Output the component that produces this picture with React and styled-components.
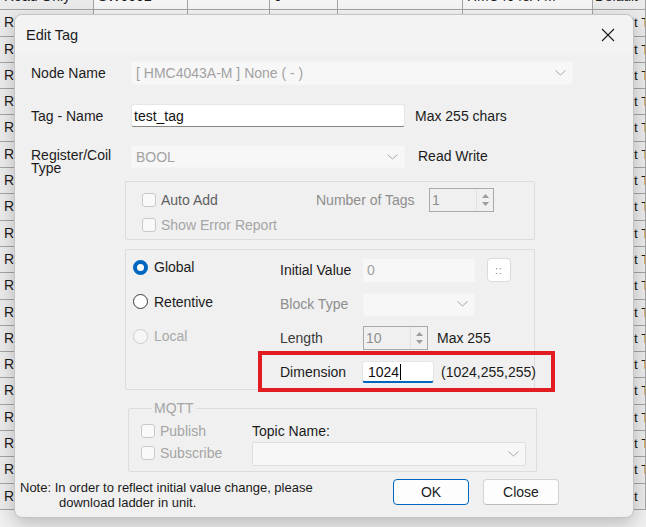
import React from 'react'
import styled, { createGlobalStyle } from 'styled-components'

const GlobalStyle = createGlobalStyle`
  html, body {
    margin: 0;
    padding: 0;
  }
  body {
    width: 646px;
    height: 527px;
    overflow: hidden;
    background: #f0f0f0;
    font-family: 'Liberation Sans', Arial, sans-serif;
    color: #1b1b1b;
  }
`

const Desktop = styled.div`
  position: relative;
  width: 646px;
  height: 527px;
  overflow: hidden;
`

// data grid behind the dialog
const Grid = styled.div`
  margin-top: -16px;
`

const GridRow = styled.div`
  display: grid;
  grid-template-columns: 94px 94px 82px 68px 125px 130px 1fr;
  height: 26.3px;
  box-sizing: border-box;
  border-bottom: 1px solid #a3a3a3;
`

const Cell = styled.div`
  border-right: 1px solid #a3a3a3;
  padding-left: ${(p) => (p.$last ? 2 : 4)}px;
  font-size: ${(p) => (p.$last ? 13.5 : 14)}px;
  line-height: 25px;
  white-space: nowrap;
  overflow: hidden;
  background: ${(p) => (p.$side ? '#ebebeb' : '#f5f5f5')};
`

const Dialog = styled.div`
  position: absolute;
  left: 14px;
  top: 14px;
  width: 620px;
  height: 504px;
  box-sizing: border-box;
  background: #f0f0f0;
  border: 1px solid #c4c4c4;
  border-radius: 8px;
  box-shadow: 0 6px 18px rgba(0, 0, 0, 0.22);
  display: flex;
  flex-direction: column;
`

const TitleBar = styled.div`
  height: 40px;
  display: flex;
  align-items: center;
  justify-content: space-between;
  padding-left: 11px;
  background: #f3f3f3;
  border-radius: 8px 8px 0 0;
`

const Title = styled.div`
  font-size: 14.5px;
`

const CloseX = styled.div`
  width: 46px;
  height: 40px;
  display: flex;
  align-items: center;
  justify-content: center;
  margin-right: 2px;
`

const Body = styled.div`
  padding: 6px 0 0 16px;
  font-size: 14px;
`

const FieldRow = styled.div`
  display: flex;
  align-items: ${(p) => (p.$top ? 'flex-start' : 'center')};
  height: ${(p) => p.$h || 24}px;
  margin-top: ${(p) => p.$mt || 0}px;
`

const Label = styled.div`
  width: ${(p) => p.$w || 100}px;
  flex: none;
  color: ${(p) => p.$color || '#1b1b1b'};
  line-height: ${(p) => (p.$stack ? '13px' : 'normal')};
  padding-top: ${(p) => (p.$stack ? 4 : 0)}px;
`

const Combo = styled.div`
  width: ${(p) => p.$w}px;
  height: ${(p) => p.$h || 23}px;
  box-sizing: border-box;
  background: #f7f7f7;
  border: 1px solid ${(p) => (p.$outlined ? '#dedede' : '#f4f4f4')};
  border-radius: 2px;
  display: flex;
  align-items: center;
  justify-content: space-between;
  padding: 0 6px 0 4px;
  color: #a2a2a2;
  flex: none;
`

const TextBox = styled.div`
  width: ${(p) => p.$w}px;
  height: ${(p) => p.$h || 23}px;
  box-sizing: border-box;
  background: #fff;
  border: 1px solid #e6e6e6;
  border-bottom: ${(p) => (p.$focus ? '2px solid #0067c0' : '1px solid #858585')};
  border-radius: 3px;
  display: flex;
  align-items: center;
  padding-left: ${(p) => (p.$focus ? 5 : 2)}px;
  color: #111;
  flex: none;
`

const Caret = styled.span`
  display: inline-block;
  width: 1px;
  height: 16px;
  background: #000;
  margin-left: 1px;
`

const Flat = styled.div`
  width: ${(p) => p.$w}px;
  height: 23px;
  box-sizing: border-box;
  background: #f7f7f7;
  display: flex;
  align-items: center;
  padding-left: 4px;
  color: #a2a2a2;
  flex: none;
`

const Hint = styled.div`
  margin-left: ${(p) => p.$ml || 10}px;
  margin-top: ${(p) => p.$mt || 0}px;
  color: #1b1b1b;
  white-space: nowrap;
`

const Spinner = styled.div`
  width: ${(p) => p.$w}px;
  height: 24px;
  box-sizing: border-box;
  border: 1px solid #a9a9a9;
  background: #f0f0f0;
  display: flex;
  align-items: center;
  justify-content: space-between;
  padding-left: 2px;
  color: #8f8f8f;
  flex: none;
`

const Arrows = styled.div`
  width: 16px;
  height: 100%;
  display: flex;
  flex-direction: column;
  align-items: center;
  justify-content: center;
  gap: 4px;
  border-left: 1px solid #e2e2e2;
`

const Group = styled.div`
  margin: ${(p) => p.$mt}px 0 0 94px;
  width: 410px;
  height: ${(p) => p.$h}px;
  box-sizing: border-box;
  border: 1px solid #dcdcdc;
  border-radius: 2px;
`

const AutoBlock = styled.div`
  padding: 6px 0 0 16px;
`

const CheckRow = styled.div`
  display: flex;
  align-items: center;
  height: ${(p) => p.$h || 22}px;
  width: ${(p) => (p.$w ? `${p.$w}px` : 'auto')};
  flex: none;
  color: ${(p) => p.$color || '#a5a5a5'};
`

const Box = styled.span`
  width: 14px;
  height: 14px;
  box-sizing: border-box;
  border: 1px solid #c9c9c9;
  border-radius: 3px;
  background: #f9f9f9;
  margin-right: 5px;
  flex: none;
`

const VarLayout = styled.div`
  display: flex;
  padding-left: 7px;
`

const RadioCol = styled.div`
  width: 147px;
  flex: none;
`

const RadioRow = styled.div`
  display: flex;
  align-items: center;
  height: 34.5px;
  color: ${(p) => (p.$disabled ? '#a9a9a9' : '#1b1b1b')};
`

const Radio = styled.span`
  width: 15px;
  height: 15px;
  box-sizing: border-box;
  border-radius: 50%;
  flex: none;
  margin-right: 6px;
  border: ${(p) =>
    p.$checked ? '4.5px solid #0067c0' : p.$disabled ? '1px solid #cdcdcd' : '1px solid #3c3c3c'};
  background: ${(p) => (p.$disabled ? '#f6f6f6' : '#fff')};
`

const FieldCol = styled.div`
  padding-top: 3px;
`

const DotsButton = styled.div`
  width: 24px;
  height: 24px;
  box-sizing: border-box;
  margin-left: 12px;
  background: #fff;
  border: 1px solid #dadada;
  border-radius: 4px;
  display: flex;
  align-items: center;
  justify-content: center;
  color: #7a7a7a;
  font-size: 10px;
  letter-spacing: 1px;
`

const Highlight = styled.div`
  position: absolute;
  left: 243px;
  top: 336px;
  width: 297px;
  height: 41px;
  box-sizing: border-box;
  border: 4px solid #e11d22;
  pointer-events: none;
`

const Mqtt = styled.fieldset`
  margin: 10px 0 0 97px;
  width: 409px;
  box-sizing: border-box;
  border: 1px solid #dcdcdc;
  border-radius: 2px;
  padding: 4px 9px 5px 12px;
  display: flex;
  min-width: 0;
`

const Legend = styled.legend`
  color: #a5a5a5;
  padding: 0 2px;
  margin-left: 11px;
  line-height: 16px;
`

const CheckCol = styled.div`
  width: 111px;
  flex: none;
`

const TopicCol = styled.div`
  display: flex;
  flex-direction: column;
`

const TopicLabel = styled.div`
  height: 22px;
  line-height: 22px;
`

const Footer = styled.div`
  display: flex;
  align-items: flex-start;
  margin-top: 7px;
  padding-left: 5px;
`

const Note = styled.div`
  width: 373px;
  font-size: 13px;
  line-height: 15px;
  padding-top: 1px;
  color: #1b1b1b;
  white-space: nowrap;
`

const NoteLine = styled.div`
  padding-left: ${(p) => (p.$indent ? 39 : 0)}px;
`

const Buttons = styled.div`
  display: flex;
  gap: 14px;
`

const Button = styled.div`
  width: 76px;
  height: 26px;
  box-sizing: border-box;
  border-radius: 4px;
  background: #fdfdfd;
  border: 1px solid ${(p) => (p.$primary ? '#0067c0' : '#d3d3d3')};
  border-bottom-color: ${(p) => (p.$primary ? '#0067c0' : '#bcbcbc')};
  display: flex;
  align-items: center;
  justify-content: center;
  font-size: 14px;
`

const Chevron = () => (
  <svg width='11' height='6' viewBox='0 0 11 6'>
    <polyline points='0.5,0.5 5.5,5 10.5,0.5' fill='none' stroke='#a5a5a5' strokeWidth='1' />
  </svg>
)

const SpinArrows = () => (
  <Arrows>
    <svg width='7' height='4' viewBox='0 0 7 4'>
      <polygon points='0,4 3.5,0 7,4' fill='#9d9d9d' />
    </svg>
    <svg width='7' height='4' viewBox='0 0 7 4'>
      <polygon points='0,0 3.5,4 7,0' fill='#9d9d9d' />
    </svg>
  </Arrows>
)

const rows = [
  ['Read Only', 'SW0002', '', '0', '', 'HMC4043A-M', 'Default'],
  ...Array.from({ length: 18 }, () => ['Read Write', '', '', '', '', '', 'Default Tag']),
  ['Read Write', '300008', '-', '0', '', 'HMC4043A-M', 'Default'],
]

export default function App() {
  return (
    <Desktop>
      <GlobalStyle />
      <Grid>
        {rows.map((r, i) => (
          <GridRow key={i}>
            {r.map((c, j) => (
              <Cell key={j} $side={j === 0 || j === 6} $last={j === 6}>
                {c}
              </Cell>
            ))}
          </GridRow>
        ))}
      </Grid>

      <Dialog>
        <TitleBar>
          <Title>Edit Tag</Title>
          <CloseX>
            <svg width='14' height='14' viewBox='0 0 14 14'>
              <path d='M1 1 L13 13 M13 1 L1 13' stroke='#1b1b1b' strokeWidth='1.1' />
            </svg>
          </CloseX>
        </TitleBar>

        <Body>
          <FieldRow $h={24}>
            <Label>Node Name</Label>
            <Combo $w={442} $h={24}>
              <span>[ HMC4043A-M ] None ( - )</span>
              <Chevron />
            </Combo>
          </FieldRow>

          <FieldRow $h={23} $mt={19}>
            <Label>Tag - Name</Label>
            <TextBox $w={274}>test_tag</TextBox>
            <Hint>Max 255 chars</Hint>
          </FieldRow>

          <FieldRow $h={23} $mt={18} $top>
            <Label $stack>
              Register/Coil
              <br />
              Type
            </Label>
            <Combo $w={274}>
              <span>BOOL</span>
              <Chevron />
            </Combo>
            <Hint $ml={13} $mt={3}>Read Write</Hint>
          </FieldRow>

          <Group $mt={13} $h={59}>
            <AutoBlock>
              <FieldRow $h={24}>
                <CheckRow $w={174} $color='#5f5f5f'>
                  <Box />
                  Auto Add
                </CheckRow>
                <Label $w={113} $color='#8e8e8e'>Number of Tags</Label>
                <Spinner $w={65}>
                  <span>1</span>
                  <SpinArrows />
                </Spinner>
              </FieldRow>
              <CheckRow $h={26}>
                <Box />
                Show Error Report
              </CheckRow>
            </AutoBlock>
          </Group>

          <Group $mt={9} $h={141}>
            <VarLayout>
              <RadioCol>
                <RadioRow>
                  <Radio $checked />
                  Global
                </RadioRow>
                <RadioRow>
                  <Radio />
                  Retentive
                </RadioRow>
                <RadioRow $disabled>
                  <Radio $disabled />
                  Local
                </RadioRow>
              </RadioCol>
              <FieldCol>
                <FieldRow $h={34}>
                  <Label $w={83}>Initial Value</Label>
                  <Flat $w={112}>0</Flat>
                  <DotsButton>::</DotsButton>
                </FieldRow>
                <FieldRow $h={34}>
                  <Label $w={83} $color='#8e8e8e'>Block Type</Label>
                  <Combo $w={112}>
                    <span />
                    <Chevron />
                  </Combo>
                </FieldRow>
                <FieldRow $h={34}>
                  <Label $w={83} $color='#3a3a3a'>Length</Label>
                  <Spinner $w={65}>
                    <span>10</span>
                    <SpinArrows />
                  </Spinner>
                  <Hint $ml={9}>Max 255</Hint>
                </FieldRow>
                <FieldRow $h={34}>
                  <Label $w={82}>Dimension</Label>
                  <TextBox $w={72} $h={22} $focus>
                    1024
                    <Caret />
                  </TextBox>
                  <Hint $ml={7}>(1024,255,255)</Hint>
                </FieldRow>
              </FieldCol>
            </VarLayout>
          </Group>

          <Mqtt>
            <Legend>MQTT</Legend>
            <CheckCol>
              <CheckRow>
                <Box />
                Publish
              </CheckRow>
              <CheckRow>
                <Box />
                Subscribe
              </CheckRow>
            </CheckCol>
            <TopicCol>
              <TopicLabel>Topic Name:</TopicLabel>
              <Combo $w={274} $h={24} $outlined>
                <span />
                <Chevron />
              </Combo>
            </TopicCol>
          </Mqtt>
        </Body>

        <Footer>
          <Note>
            <NoteLine>Note: In order to reflect initial value change, please</NoteLine>
            <NoteLine $indent>download ladder in unit.</NoteLine>
          </Note>
          <Buttons>
            <Button $primary>OK</Button>
            <Button>Close</Button>
          </Buttons>
        </Footer>

        <Highlight />
      </Dialog>
    </Desktop>
  )
}
